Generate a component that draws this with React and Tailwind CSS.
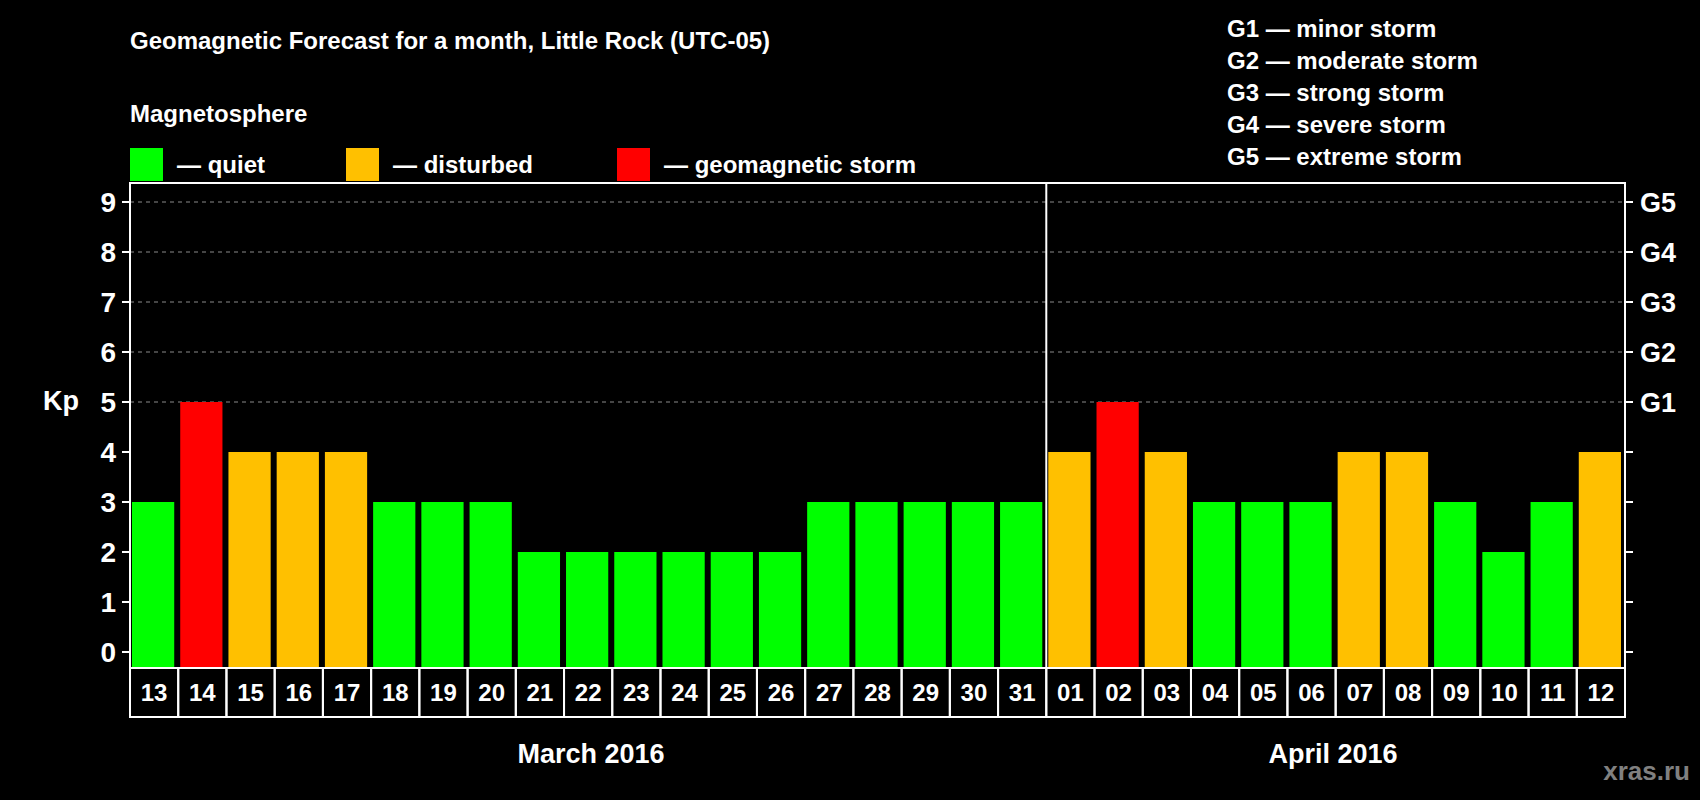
import React from "react";

const march = [3, 5, 4, 4, 4, 3, 3, 3, 2, 2, 2, 2, 2, 2, 3, 3, 3, 3, 3];
const april = [4, 5, 4, 3, 3, 3, 4, 4, 3, 2, 3, 4];

const days = [
  ...march.map((v, i) => ({ label: String(13 + i), v })),
  ...april.map((v, i) => ({ label: String(i + 1).padStart(2, "0"), v })),
];

const color = (v) => (v >= 5 ? "#ff0000" : v === 4 ? "#ffc000" : "#00ff00");

const L = 130;
const R = 1625;
const TOP = 183;
const BOT = 668;
const Y0 = 652;
const W = (R - L) / days.length;
const yOf = (v) => Y0 - v * 50;

const storms = ["G1 — minor storm", "G2 — moderate storm", "G3 — strong storm", "G4 — severe storm", "G5 — extreme storm"];

const Chart = () => (
  <svg width="1700" height="630" viewBox="0 170 1700 630" className="block" style={{ fontFamily: "'Liberation Sans', Arial, sans-serif", fontWeight: 700 }}>
    {[5, 6, 7, 8, 9].map((v) => (
      <line key={v} x1={L} x2={R} y1={yOf(v)} y2={yOf(v)} stroke="#8a8a8a" strokeWidth="1" strokeDasharray="4 4" />
    ))}
    {days.map((d, i) => (
      <rect key={i} x={L + i * W + 2} y={yOf(d.v)} width={W - 6} height={BOT - yOf(d.v)} fill={color(d.v)} />
    ))}
    <rect x={L} y={TOP} width={R - L} height={BOT - TOP} fill="none" stroke="#fff" strokeWidth="2" />
    <line x1={L + 19 * W} x2={L + 19 * W} y1={TOP} y2={BOT} stroke="#fff" strokeWidth="2" />
    {[0, 1, 2, 3, 4, 5, 6, 7, 8, 9].map((v) => (
      <g key={v}>
        <line x1={122} x2={L} y1={yOf(v)} y2={yOf(v)} stroke="#fff" strokeWidth="2" />
        <line x1={R} x2={1633} y1={yOf(v)} y2={yOf(v)} stroke="#fff" strokeWidth="2" />
        <text x={116} y={yOf(v) + 10} textAnchor="end" fill="#fff" fontSize="28">{v}</text>
      </g>
    ))}
    {[5, 6, 7, 8, 9].map((v, i) => (
      <text key={v} x={1640} y={yOf(v) + 10} fill="#fff" fontSize="27">{"G" + (i + 1)}</text>
    ))}
    <text x={43} y={410} fill="#fff" fontSize="27">Kp</text>
    {days.map((d, i) => (
      <g key={i}>
        <rect x={L + i * W} y={BOT} width={W} height={49} fill="none" stroke="#fff" strokeWidth="2" />
        <text x={L + i * W + W / 2} y={701} textAnchor="middle" fill="#fff" fontSize="24">{d.label}</text>
      </g>
    ))}
    <text x={591} y={763} textAnchor="middle" fill="#fff" fontSize="27">March 2016</text>
    <text x={1333} y={763} textAnchor="middle" fill="#fff" fontSize="27">April 2016</text>
    <text x={1690} y={780} textAnchor="end" fill="#808080" fontSize="26">xras.ru</text>
  </svg>
);

const Legend = ({ c, label, w }) => (
  <div className={`flex items-center gap-[14px] ${w}`}>
    <div className="h-[33px] w-[33px]" style={{ background: c }} />
    <span>{label}</span>
  </div>
);

export default function App() {
  return (
    <div className="w-[1700px] h-[800px] bg-black text-white font-bold overflow-hidden flex flex-col" style={{ fontFamily: "'Liberation Sans', Arial, sans-serif" }}>
      <div className="h-[170px] flex relative">
        <div className="pl-[130px] pt-[27px] text-[24px] leading-[28px]">
          <div>Geomagnetic Forecast for a month, Little Rock (UTC-05)</div>
          <div className="mt-[45px]">Magnetosphere</div>
          <div className="mt-[20px] flex">
            <Legend c="#00ff00" label="— quiet" w="w-[216px]" />
            <Legend c="#ffc000" label="— disturbed" w="w-[271px]" />
            <Legend c="#ff0000" label="— geomagnetic storm" w="" />
          </div>
        </div>
        <div className="absolute left-[1227px] top-[13px] text-[24px] leading-[32px]">
          {storms.map((s) => (
            <div key={s}>{s}</div>
          ))}
        </div>
      </div>
      <Chart />
    </div>
  );
}
